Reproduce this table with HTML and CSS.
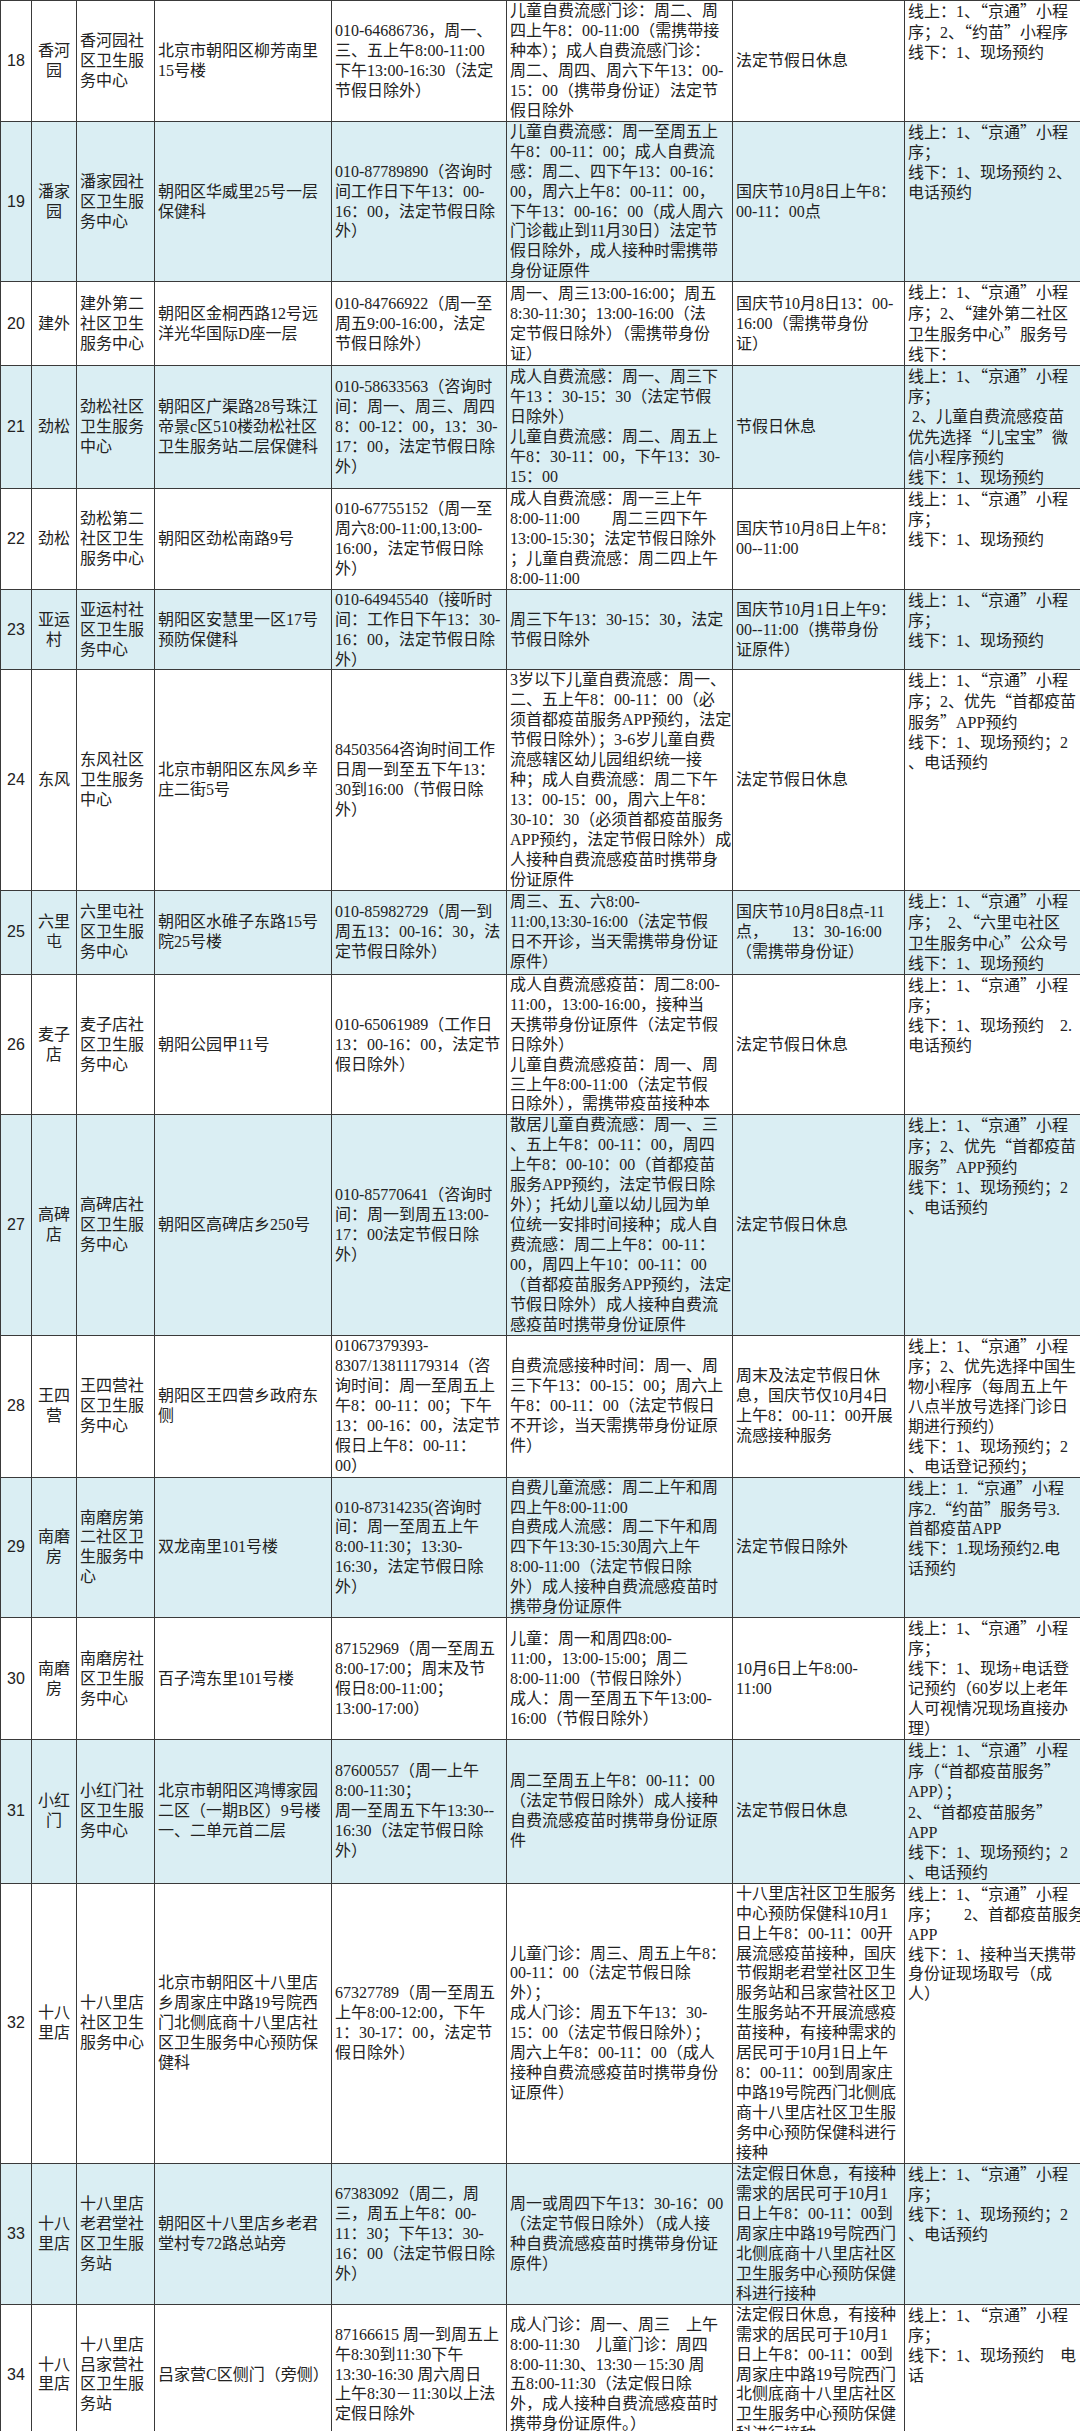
FILE: index.html
```html
<!DOCTYPE html>
<html lang="zh-CN">
<head>
<meta charset="utf-8">
<title>流感疫苗接种门诊</title>
<link rel="stylesheet" href="styles.css">
</head>
<body>
<table class="sheet">
<colgroup>
<col class="c-num"><col class="c-area"><col class="c-name"><col class="c-addr"><col class="c-phone"><col class="c-sched"><col class="c-hol"><col class="c-book">
</colgroup>
<tbody>
<tr>
<td class="num">18</td>
<td class="area">香河<br>园</td>
<td>香河园社<br>区卫生服<br>务中心</td>
<td>北京市朝阳区柳芳南里<br>15号楼</td>
<td>010-64686736，周一、<br>三、五上午8:00-11:00<br>下午13:00-16:30（法定<br>节假日除外）</td>
<td>儿童自费流感门诊：周二、周<br>四上午8：00-11:00（需携带接<br>种本）；成人自费流感门诊：<br>周二、周四、周六下午13：00-<br>15：00（携带身份证）法定节<br>假日除外</td>
<td>法定节假日休息</td>
<td class="book">线上：1、<span class="q">“</span>京通<span class="q">”</span>小程<br>序；2、<span class="q">“</span>约苗<span class="q">”</span>小程序<br>线下：1、现场预约</td>
</tr>
<tr class="alt">
<td class="num">19</td>
<td class="area">潘家<br>园</td>
<td>潘家园社<br>区卫生服<br>务中心</td>
<td>朝阳区华威里25号一层<br>保健科</td>
<td>010-87789890（咨询时<br>间工作日下午13：00-<br>16：00，法定节假日除<br>外）</td>
<td>儿童自费流感：周一至周五上<br>午8：00-11：00；成人自费流<br>感：周二、四下午13：00-16：<br>00，周六上午8：00-11：00，<br>下午13：00-16：00（成人周六<br>门诊截止到11月30日）法定节<br>假日除外，成人接种时需携带<br>身份证原件</td>
<td>国庆节10月8日上午8：<br>00-11：00点</td>
<td class="book">线上：1、<span class="q">“</span>京通<span class="q">”</span>小程<br>序；<br>线下：1、现场预约 2、<br>电话预约</td>
</tr>
<tr>
<td class="num">20</td>
<td class="area">建外</td>
<td>建外第二<br>社区卫生<br>服务中心</td>
<td>朝阳区金桐西路12号远<br>洋光华国际D座一层</td>
<td>010-84766922（周一至<br>周五9:00-16:00，法定<br>节假日除外）</td>
<td>周一、周三13:00-16:00；周五<br>8:30-11:30；13:00-16:00（法<br>定节假日除外）（需携带身份<br>证）</td>
<td>国庆节10月8日13：00-<br>16:00（需携带身份<br>证）</td>
<td class="book">线上：1、<span class="q">“</span>京通<span class="q">”</span>小程<br>序；2、<span class="q">“</span>建外第二社区<br>卫生服务中心<span class="q">”</span>服务号<br>线下：</td>
</tr>
<tr class="alt">
<td class="num">21</td>
<td class="area">劲松</td>
<td>劲松社区<br>卫生服务<br>中心</td>
<td>朝阳区广渠路28号珠江<br>帝景c区510楼劲松社区<br>卫生服务站二层保健科</td>
<td>010-58633563（咨询时<br>间：周一、周三、周四<br>8：00-12：00，13：30-<br>17：00，法定节假日除<br>外）</td>
<td>成人自费流感：周一、周三下<br>午13 ：30-15：30（法定节假<br>日除外）<br>儿童自费流感：周二、周五上<br>午8：30-11：00，下午13：30-<br>15：00</td>
<td>节假日休息</td>
<td class="book">线上：1、<span class="q">“</span>京通<span class="q">”</span>小程<br>序；<br>&nbsp;2、儿童自费流感疫苗<br>优先选择<span class="q">“</span>儿宝宝<span class="q">”</span>微<br>信小程序预约<br>线下：1、现场预约</td>
</tr>
<tr>
<td class="num">22</td>
<td class="area">劲松</td>
<td>劲松第二<br>社区卫生<br>服务中心</td>
<td>朝阳区劲松南路9号</td>
<td>010-67755152（周一至<br>周六8:00-11:00,13:00-<br>16:00，法定节假日除<br>外）</td>
<td>成人自费流感：周一三上午<br>8:00-11:00　　周二三四下午<br>13:00-15:30；法定节假日除外<br>；儿童自费流感：周二四上午<br>8:00-11:00</td>
<td>国庆节10月8日上午8：<br>00--11:00</td>
<td class="book">线上：1、<span class="q">“</span>京通<span class="q">”</span>小程<br>序；<br>线下：1、现场预约</td>
</tr>
<tr class="alt">
<td class="num">23</td>
<td class="area">亚运<br>村</td>
<td>亚运村社<br>区卫生服<br>务中心</td>
<td>朝阳区安慧里一区17号<br>预防保健科</td>
<td>010-64945540（接听时<br>间：工作日下午13：30-<br>16：00，法定节假日除<br>外）</td>
<td>周三下午13：30-15：30，法定<br>节假日除外</td>
<td>国庆节10月1日上午9：<br>00--11:00（携带身份<br>证原件）</td>
<td class="book">线上：1、<span class="q">“</span>京通<span class="q">”</span>小程<br>序；<br>线下：1、现场预约</td>
</tr>
<tr>
<td class="num">24</td>
<td class="area">东风</td>
<td>东风社区<br>卫生服务<br>中心</td>
<td>北京市朝阳区东风乡辛<br>庄二街5号</td>
<td>84503564咨询时间工作<br>日周一到至五下午13：<br>30到16:00（节假日除<br>外）</td>
<td>3岁以下儿童自费流感：周一、<br>二、五上午8：00-11：00（必<br>须首都疫苗服务APP预约，法定<br>节假日除外）；3-6岁儿童自费<br>流感辖区幼儿园组织统一接<br>种；成人自费流感：周二下午<br>13：00-15：00，周六上午8：<br>30-10：30（必须首都疫苗服务<br>APP预约，法定节假日除外）成<br>人接种自费流感疫苗时携带身<br>份证原件</td>
<td>法定节假日休息</td>
<td class="book">线上：1、<span class="q">“</span>京通<span class="q">”</span>小程<br>序；2、优先<span class="q">“</span>首都疫苗<br>服务<span class="q">”</span>APP预约<br>线下：1、现场预约；2<br>、电话预约</td>
</tr>
<tr class="alt">
<td class="num">25</td>
<td class="area">六里<br>屯</td>
<td>六里屯社<br>区卫生服<br>务中心</td>
<td>朝阳区水碓子东路15号<br>院25号楼</td>
<td>010-85982729（周一到<br>周五13：00-16：30，法<br>定节假日除外）</td>
<td>周三、五、六8:00-<br>11:00,13:30-16:00（法定节假<br>日不开诊，当天需携带身份证<br>原件）</td>
<td>国庆节10月8日8点-11<br>点，　　13：30-16:00<br>（需携带身份证）</td>
<td class="book">线上：1、<span class="q">“</span>京通<span class="q">”</span>小程<br>序；　2、<span class="q">“</span>六里屯社区<br>卫生服务中心<span class="q">”</span>公众号<br>线下：1、现场预约</td>
</tr>
<tr>
<td class="num">26</td>
<td class="area">麦子<br>店</td>
<td>麦子店社<br>区卫生服<br>务中心</td>
<td>朝阳公园甲11号</td>
<td>010-65061989（工作日<br>13：00-16：00，法定节<br>假日除外）</td>
<td>成人自费流感疫苗：周二8:00-<br>11:00，13:00-16:00，接种当<br>天携带身份证原件（法定节假<br>日除外）<br>儿童自费流感疫苗：周一、周<br>三上午8:00-11:00（法定节假<br>日除外），需携带疫苗接种本</td>
<td>法定节假日休息</td>
<td class="book">线上：1、<span class="q">“</span>京通<span class="q">”</span>小程<br>序；<br>线下：1、现场预约　2.<br>电话预约</td>
</tr>
<tr class="alt">
<td class="num">27</td>
<td class="area">高碑<br>店</td>
<td>高碑店社<br>区卫生服<br>务中心</td>
<td>朝阳区高碑店乡250号</td>
<td>010-85770641（咨询时<br>间：周一到周五13:00-<br>17：00法定节假日除<br>外）</td>
<td>散居儿童自费流感：周一、三<br>、五上午8：00-11：00，周四<br>上午8：00-10：00（首都疫苗<br>服务APP预约，法定节假日除<br>外）；托幼儿童以幼儿园为单<br>位统一安排时间接种；成人自<br>费流感：周二上午8：00-11：<br>00，周四上午10：00-11：00<br>（首都疫苗服务APP预约，法定<br>节假日除外）成人接种自费流<br>感疫苗时携带身份证原件</td>
<td>法定节假日休息</td>
<td class="book">线上：1、<span class="q">“</span>京通<span class="q">”</span>小程<br>序；2、优先<span class="q">“</span>首都疫苗<br>服务<span class="q">”</span>APP预约<br>线下：1、现场预约；2<br>、电话预约</td>
</tr>
<tr>
<td class="num">28</td>
<td class="area">王四<br>营</td>
<td>王四营社<br>区卫生服<br>务中心</td>
<td>朝阳区王四营乡政府东<br>侧</td>
<td>01067379393-<br>8307/13811179314（咨<br>询时间：周一至周五上<br>午8：00-11：00；下午<br>13：00-16：00，法定节<br>假日上午8：00-11：<br>00）</td>
<td>自费流感接种时间：周一、周<br>三下午13：00-15：00；周六上<br>午8：00-11：00（法定节假日<br>不开诊，当天需携带身份证原<br>件）</td>
<td>周末及法定节假日休<br>息，国庆节仅10月4日<br>上午8：00-11：00开展<br>流感接种服务</td>
<td class="book">线上：1、<span class="q">“</span>京通<span class="q">”</span>小程<br>序；2、优先选择中国生<br>物小程序（每周五上午<br>八点半放号选择门诊日<br>期进行预约）<br>线下：1、现场预约；2<br>、电话登记预约；</td>
</tr>
<tr class="alt">
<td class="num">29</td>
<td class="area">南磨<br>房</td>
<td>南磨房第<br>二社区卫<br>生服务中<br>心</td>
<td>双龙南里101号楼</td>
<td>010-87314235(咨询时<br>间：周一至周五上午<br>8:00-11:30；13:30-<br>16:30，法定节假日除<br>外）</td>
<td>自费儿童流感：周二上午和周<br>四上午8:00-11:00<br>自费成人流感：周二下午和周<br>四下午13:30-15:30周六上午<br>8:00-11:00（法定节假日除<br>外）成人接种自费流感疫苗时<br>携带身份证原件</td>
<td>法定节假日除外</td>
<td class="book">线上：1.<span class="q">“</span>京通<span class="q">”</span>小程<br>序2.<span class="q">“</span>约苗<span class="q">”</span>服务号3.<br>首都疫苗APP<br>线下：1.现场预约2.电<br>话预约</td>
</tr>
<tr>
<td class="num">30</td>
<td class="area">南磨<br>房</td>
<td>南磨房社<br>区卫生服<br>务中心</td>
<td>百子湾东里101号楼</td>
<td>87152969（周一至周五<br>8:00-17:00；周末及节<br>假日8:00-11:00；<br>13:00-17:00）</td>
<td>儿童：周一和周四8:00-<br>11:00，13:00-15:00；周二<br>8:00-11:00（节假日除外）<br>成人：周一至周五下午13:00-<br>16:00（节假日除外）</td>
<td>10月6日上午8:00-<br>11:00</td>
<td class="book">线上：1、<span class="q">“</span>京通<span class="q">”</span>小程<br>序；<br>线下：1、现场+电话登<br>记预约（60岁以上老年<br>人可视情况现场直接办<br>理）</td>
</tr>
<tr class="alt">
<td class="num">31</td>
<td class="area">小红<br>门</td>
<td>小红门社<br>区卫生服<br>务中心</td>
<td>北京市朝阳区鸿博家园<br>二区（一期B区）9号楼<br>一、二单元首二层</td>
<td>87600557（周一上午<br>8:00-11:30；<br>周一至周五下午13:30--<br>16:30（法定节假日除<br>外）</td>
<td>周二至周五上午8：00-11：00<br>（法定节假日除外）成人接种<br>自费流感疫苗时携带身份证原<br>件</td>
<td>法定节假日休息</td>
<td class="book">线上：1、<span class="q">“</span>京通<span class="q">”</span>小程<br>序（<span class="q">“</span>首都疫苗服务<span class="q">”</span><br>APP）；<br>2、<span class="q">“</span>首都疫苗服务<span class="q">”</span><br>APP<br>线下：1、现场预约；2<br>、电话预约</td>
</tr>
<tr>
<td class="num">32</td>
<td class="area">十八<br>里店</td>
<td>十八里店<br>社区卫生<br>服务中心</td>
<td>北京市朝阳区十八里店<br>乡周家庄中路19号院西<br>门北侧底商十八里店社<br>区卫生服务中心预防保<br>健科</td>
<td>67327789（周一至周五<br>上午8:00-12:00，下午<br>1：30-17：00，法定节<br>假日除外）</td>
<td>儿童门诊：周三、周五上午8：<br>00-11：00（法定节假日除<br>外）；<br>成人门诊：周五下午13：30-<br>15：00（法定节假日除外）；<br>周六上午8：00-11：00（成人<br>接种自费流感疫苗时携带身份<br>证原件）</td>
<td>十八里店社区卫生服务<br>中心预防保健科10月1<br>日上午8：00-11：00开<br>展流感疫苗接种，国庆<br>节假期老君堂社区卫生<br>服务站和吕家营社区卫<br>生服务站不开展流感疫<br>苗接种，有接种需求的<br>居民可于10月1日上午<br>8：00-11：00到周家庄<br>中路19号院西门北侧底<br>商十八里店社区卫生服<br>务中心预防保健科进行<br>接种</td>
<td class="book">线上：1、<span class="q">“</span>京通<span class="q">”</span>小程<br>序；　　2、首都疫苗服务<br>APP<br>线下：1、接种当天携带<br>身份证现场取号（成<br>人）</td>
</tr>
<tr class="alt">
<td class="num">33</td>
<td class="area">十八<br>里店</td>
<td>十八里店<br>老君堂社<br>区卫生服<br>务站</td>
<td>朝阳区十八里店乡老君<br>堂村专72路总站旁</td>
<td>67383092（周二，周<br>三，周五上午8：00-<br>11：30；下午13：30-<br>16：00（法定节假日除<br>外）</td>
<td>周一或周四下午13：30-16：00<br>（法定节假日除外）（成人接<br>种自费流感疫苗时携带身份证<br>原件）</td>
<td>法定假日休息，有接种<br>需求的居民可于10月1<br>日上午8：00-11：00到<br>周家庄中路19号院西门<br>北侧底商十八里店社区<br>卫生服务中心预防保健<br>科进行接种</td>
<td class="book">线上：1、<span class="q">“</span>京通<span class="q">”</span>小程<br>序；<br>线下：1、现场预约；2<br>、电话预约</td>
</tr>
<tr>
<td class="num">34</td>
<td class="area">十八<br>里店</td>
<td>十八里店<br>吕家营社<br>区卫生服<br>务站</td>
<td>吕家营C区侧门（旁侧）</td>
<td>87166615 周一到周五上<br>午8:30到11:30下午<br>13:30-16:30 周六周日<br>上午8:30－11:30以上法<br>定假日除外</td>
<td>成人门诊：周一、周三　上午<br>8:00-11:30　儿童门诊：周四<br>8:00-11:30、13:30－15:30 周<br>五8:00-11:30（法定假日除<br>外，成人接种自费流感疫苗时<br>携带身份证原件。）</td>
<td>法定假日休息，有接种<br>需求的居民可于10月1<br>日上午8：00-11：00到<br>周家庄中路19号院西门<br>北侧底商十八里店社区<br>卫生服务中心预防保健<br>科进行接种</td>
<td class="book">线上：1、<span class="q">“</span>京通<span class="q">”</span>小程<br>序；<br>线下：1、现场预约　电<br>话</td>
</tr>
</tbody>
</table>
</body>
</html>
```

FILE: styles.css
```css
html, body {
  margin: 0;
  padding: 0;
  background: #ffffff;
}

.sheet {
  border-collapse: collapse;
  table-layout: fixed;
  width: 1080px;
  font-family: "Liberation Serif", "Noto Sans CJK SC", serif;
  font-size: 16px;
  line-height: 19.95px;
  color: #222222;
}

.c-num { width: 31px; }
.c-area { width: 45px; }
.c-name { width: 78px; }
.c-addr { width: 177px; }
.c-phone { width: 175px; }
.c-sched { width: 226px; }
.c-hol { width: 172px; }
.c-book { width: 176px; }

.sheet td {
  border: 1px solid #3a3a3a;
  padding: 0 1px 0 3px;
  vertical-align: middle;
  text-align: left;
  white-space: nowrap;
}

.sheet tr.alt td {
  background: #daeef3;
}

.sheet td.num {
  font-family: "Liberation Sans", "Noto Sans CJK SC", sans-serif;
  text-align: center;
  padding: 0;
}

.sheet td.area {
  text-align: center;
  padding: 0;
}

.sheet td.book {
  vertical-align: top;
}

.q {
  font-family: "Noto Sans CJK SC", sans-serif;
}
```
